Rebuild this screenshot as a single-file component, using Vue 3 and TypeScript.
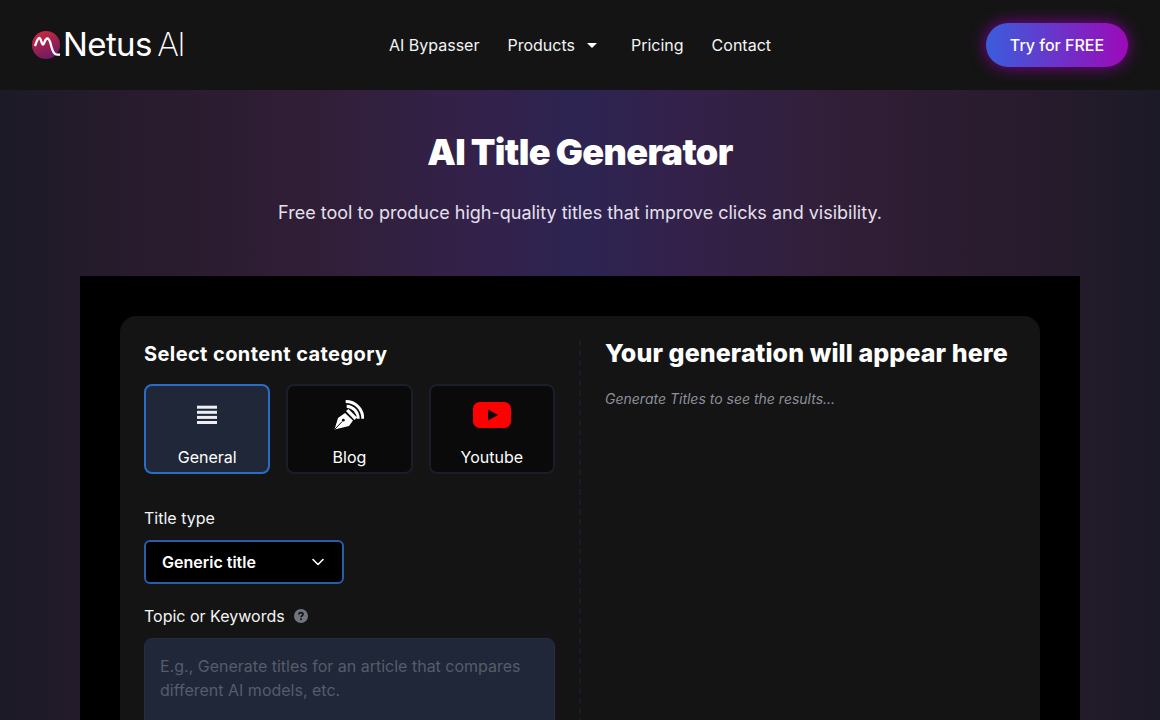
<script setup lang="ts">
import { ref } from 'vue';

const navLinks = ref([
  { label: 'AI Bypasser', caret: false },
  { label: 'Products', caret: true },
  { label: 'Pricing', caret: false },
  { label: 'Contact', caret: false },
]);

const activeCategory = ref('General');
const categories = ['General', 'Blog', 'Youtube'];
</script>

<template>
  <div class="page">
    <header class="navbar">
      <a class="logo">
        <svg class="logo-mark" width="28" height="28" viewBox="0 0 28 28">
          <defs>
            <linearGradient id="logoGrad" x1="0.3" y1="0" x2="0.7" y2="1">
              <stop offset="0" stop-color="#c9283f" />
              <stop offset="1" stop-color="#6a1a66" />
            </linearGradient>
          </defs>
          <circle cx="14" cy="14" r="14" fill="url(#logoGrad)" />
          <path d="M3 15 C4.5 11 5.5 7 7.3 7 C9 7 9.5 13.5 11 13.5 C12.5 13.5 12.5 7.5 15.5 7.5 C19.5 7.5 18.5 22 24 23.3 C25.5 23.6 27 23.6 28 23.6" fill="none" stroke="#fff" stroke-width="2.3" />
        </svg>
        <span class="logo-text"><span class="logo-strong">Netus</span> <span class="logo-light">AI</span></span>
      </a>
      <nav class="nav-links">
        <a v-for="link in navLinks" :key="link.label" class="nav-link">
          {{ link.label }}
          <span v-if="link.caret" class="caret"></span>
        </a>
      </nav>
      <button class="try-btn">Try for FREE</button>
    </header>

    <section class="hero">
      <h1>AI Title Generator</h1>
      <p>Free tool to produce high-quality titles that improve clicks and visibility.</p>
    </section>

    <main class="content">
      <div class="panel">
        <div class="left">
          <h2 class="section-title">Select content category</h2>
          <div class="cats">
            <button
              v-for="cat in categories"
              :key="cat"
              class="cat"
              :class="{ 'cat--active': activeCategory === cat }"
              @click="activeCategory = cat"
            >
              <svg v-if="cat === 'General'" class="cat-icon cat-icon--general" width="20" height="20" viewBox="0 0 20 20" fill="#eceef2">
                <rect x="0" y="0.7" width="20" height="3" />
                <rect x="0" y="5.8" width="20" height="3" />
                <rect x="0" y="10.9" width="20" height="3" />
                <rect x="0" y="16" width="20" height="3" />
              </svg>
              <svg v-else-if="cat === 'Blog'" class="cat-icon" width="30" height="30" viewBox="0 0 30 30" fill="none">
                <path d="M0.5 29.5 L4 18 L11 13 L19 20.5 L15 26 Z" fill="#fff" />
                <path d="M0.5 29.5 L8.2 21.5" stroke="#0a0a0a" stroke-width="1" />
                <circle cx="9.3" cy="20.2" r="1.4" fill="#0a0a0a" />
                <path d="M12 11 L14.5 9 L23 17.5 L20.5 20 Z" fill="#fff" />
                <path d="M12.7 6.3 C19 6.5 24.2 12 24.2 18.8" stroke="#fff" stroke-width="3" />
                <path d="M11.7 1.5 C21.5 1.5 28.8 9 28.8 18.8" stroke="#fff" stroke-width="3" />
              </svg>
              <svg v-else class="cat-icon cat-icon--yt" width="38" height="26" viewBox="0 0 38 26">
                <rect x="0" y="0" width="38" height="26" rx="6.5" fill="#ff0000" />
                <path d="M15 7.5 L25 13 L15 18.5 Z" fill="#0a0a0a" />
              </svg>
              <span class="cat-label">{{ cat }}</span>
            </button>
          </div>

          <label class="field-label">Title type</label>
          <div class="select">
            <span>Generic title</span>
            <svg width="12" height="8" viewBox="0 0 12 8" fill="none">
              <path d="M1 1.5 L6 6.5 L11 1.5" stroke="#fff" stroke-width="1.6" stroke-linecap="round" stroke-linejoin="round" />
            </svg>
          </div>

          <label class="field-label field-label--topic">
            Topic or Keywords
            <svg class="help" width="14" height="14" viewBox="0 0 14 14">
              <circle cx="7" cy="7" r="7" fill="#70757f" />
              <path d="M4.9 5.4 C4.9 3 9.1 3 9.1 5.3 C9.1 6.8 7 6.7 7 8.3" fill="none" stroke="#141414" stroke-width="1.6" />
              <circle cx="7" cy="10.3" r="1" fill="#141414" />
            </svg>
          </label>
          <div class="textarea">E.g., Generate titles for an article that compares different AI models, etc.</div>
        </div>
        <div class="right">
          <h2 class="result-title">Your generation will appear here</h2>
          <p class="result-hint">Generate Titles to see the results...</p>
        </div>
      </div>
    </main>
  </div>
</template>

<style scoped>
.page {
  height: 720px;
  overflow: hidden;
  font-family: Inter, "Liberation Sans", sans-serif;
  color: #fff;
  background: linear-gradient(90deg, #1c1a26 0%, #281b2d 12%, #301e36 26%, #33214a 41%, #2d2452 50%, #33214a 59%, #301e36 74%, #281b2d 88%, #1c1a26 100%);
}
.navbar {
  height: 90px;
  box-sizing: border-box;
  background: #141414;
  display: grid;
  grid-template-columns: 1fr auto 1fr;
  align-items: center;
  padding: 0 32px;
}
.logo {
  display: flex;
  align-items: center;
  gap: 3px;
}
.logo-mark {
  flex: none;
  overflow: visible;
}
.logo-text {
  font-size: 33px;
  line-height: 1;
  color: #fff;
  white-space: nowrap;
  margin-top: -2px;
}
.logo-strong {
  font-weight: 400;
  letter-spacing: -0.6px;
}
.logo-light {
  font-weight: 200;
  letter-spacing: -1.5px;
  margin-left: -4px;
}
.nav-links {
  display: flex;
  gap: 28px;
}
.nav-link {
  font-size: 16px;
  color: #f3f4f6;
  display: flex;
  align-items: center;
}
.caret {
  width: 0;
  height: 0;
  margin: 0 6px 0 12px;
  border-left: 5px solid transparent;
  border-right: 5px solid transparent;
  border-top: 5px solid #fff;
}
.try-btn {
  justify-self: end;
  width: 142px;
  height: 44px;
  border: none;
  border-radius: 22px;
  font: 500 16px Inter, sans-serif;
  color: #fff;
  background: linear-gradient(90deg, #3a5ddc, #9c0ab8);
  box-shadow: 0 0 16px #85009c;
}
.hero {
  height: 186px;
  box-sizing: border-box;
  padding-top: 38px;
  text-align: center;
}
.hero h1 {
  margin: 0;
  font-size: 36px;
  line-height: 48px;
  font-weight: 900;
  letter-spacing: -0.6px;
  word-spacing: -1px;
}
.hero p {
  margin: 23px 0 0;
  font-size: 18px;
  line-height: 28px;
  color: #e5e0ec;
}
.content {
  margin: 0 80px;
  background: #000;
  padding: 40px;
  height: 700px;
  box-sizing: border-box;
}
.panel {
  display: grid;
  grid-template-columns: 461px 1fr;
  background: #141414;
  border-radius: 16px;
  padding: 24px;
  height: 660px;
  box-sizing: border-box;
}
.left {
  padding-right: 24px;
  border-right: 2px dashed #181b28;
  margin-right: 24px;
  box-sizing: border-box;
}
.section-title {
  margin: 0;
  font-size: 20px;
  line-height: 28px;
  font-weight: 700;
  letter-spacing: 0.4px;
}
.cats {
  display: grid;
  grid-template-columns: repeat(3, 1fr);
  gap: 16px;
  margin-top: 16px;
}
.cat {
  height: 90px;
  box-sizing: border-box;
  border: 2px solid #1a1d2b;
  border-radius: 8px;
  background: #0a0a0a;
  color: #fff;
  font: 400 16px Inter, sans-serif;
  display: flex;
  flex-direction: column;
  align-items: center;
  justify-content: flex-end;
  padding: 0 0 3px;
  position: relative;
}
.cat-icon {
  position: absolute;
  top: 14px;
}
.cat-icon--general {
  top: 19px;
}
.cat-icon--yt {
  top: 16px;
}
.cat--active {
  background: #202738;
  border-color: #2b6cc4;
}
.cat-label {
  line-height: 24px;
}
.field-label {
  display: flex;
  align-items: center;
  margin-top: 32px;
  font-size: 16px;
  line-height: 24px;
  color: #f3f4f6;
}
.field-label--topic {
  margin-top: 20px;
  gap: 9px;
}
.select {
  margin-top: 10px;
  width: 200px;
  height: 44px;
  box-sizing: border-box;
  background: #000;
  border: 2px solid #2a5ca8;
  border-radius: 6px;
  padding: 0 18px 0 16px;
  display: flex;
  align-items: center;
  justify-content: space-between;
  font-weight: 600;
  font-size: 16px;
}
.textarea {
  margin-top: 10px;
  height: 140px;
  box-sizing: border-box;
  background: #202738;
  border: 1px solid #262d3e;
  border-radius: 8px;
  padding: 15px;
  font-size: 16px;
  line-height: 24px;
  color: #565c6b;
}
.result-title {
  margin: 0;
  font-size: 25px;
  line-height: 26px;
  font-weight: 800;
  letter-spacing: 0.1px;
}
.result-hint {
  margin: 23px 0 0;
  font-size: 14px;
  line-height: 20px;
  font-style: italic;
  color: #8b909a;
}
</style>
